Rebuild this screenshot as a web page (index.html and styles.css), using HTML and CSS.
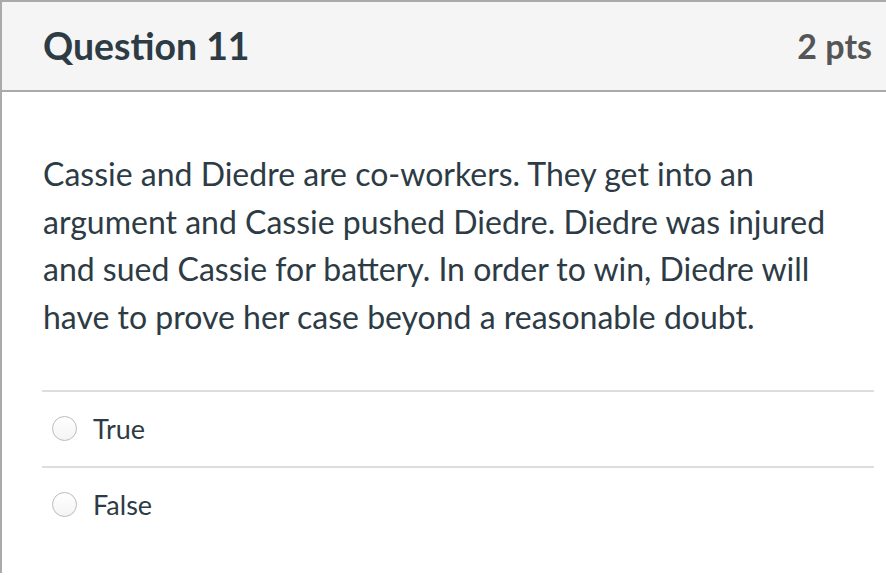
FILE: index.html
```html
<!DOCTYPE html>
<html lang="en">
<head>
<meta charset="utf-8">
<title>Question 11</title>
<link rel="stylesheet" href="styles.css">
</head>
<body>
<div class="question">
  <div class="question-header">
    <h2 class="question-title">Question 11</h2>
    <span class="question-points">2 pts</span>
  </div>
  <div class="question-body">
    <p class="question-text">Cassie and Diedre are co-workers. They get into an argument and Cassie pushed Diedre. Diedre was injured and sued Cassie for battery. In order to win, Diedre will have to prove her case beyond a reasonable doubt.</p>
    <div class="answers">
      <label class="answer">
        <span class="radio"></span>
        <span class="answer-label">True</span>
      </label>
      <label class="answer">
        <span class="radio"></span>
        <span class="answer-label">False</span>
      </label>
    </div>
  </div>
</div>
</body>
</html>
```

FILE: styles.css
```css
html, body {
  margin: 0;
  padding: 0;
  background: #ffffff;
}

body {
  font-family: Lato, "Open Sans", "Liberation Sans", sans-serif;
  color: #2d3b45;
  width: 886px;
  height: 575px;
  overflow: hidden;
}

.question {
  border-top: 2px solid #aaaaaa;
  border-left: 2px solid #aaaaaa;
  height: 573px;
  box-sizing: border-box;
}

.question-header {
  height: 88px;
  background: #f5f5f5;
  border-bottom: 2px solid #aaaaaa;
  display: flex;
  align-items: center;
  justify-content: space-between;
  padding: 0 14px 0 41px;
}

.question-title {
  margin: 0 0 2px 0;
  font-size: 37.4px;
  font-weight: 700;
  color: #2d3b45;
}

.question-points {
  margin-bottom: 2px;
  font-size: 34px;
  font-weight: 700;
  color: #555555;
}

.question-body {
  padding: 58px 12px 0 40px;
}

.question-text {
  margin: 0 0 49px 1px;
  font-size: 32px;
  line-height: 47.7px;
  color: #2d3b45;
}

.answer {
  display: flex;
  align-items: center;
  height: 74px;
  border-top: 2px solid #dddddd;
}

.radio {
  width: 25px;
  height: 25px;
  box-sizing: border-box;
  border-radius: 50%;
  border: 1px solid #bcbcbc;
  background: linear-gradient(#ffffff, #f4f4f4);
  margin-left: 10px;
  margin-right: 16px;
}

.answer-label {
  font-size: 27px;
  color: #2d3b45;
}
```
